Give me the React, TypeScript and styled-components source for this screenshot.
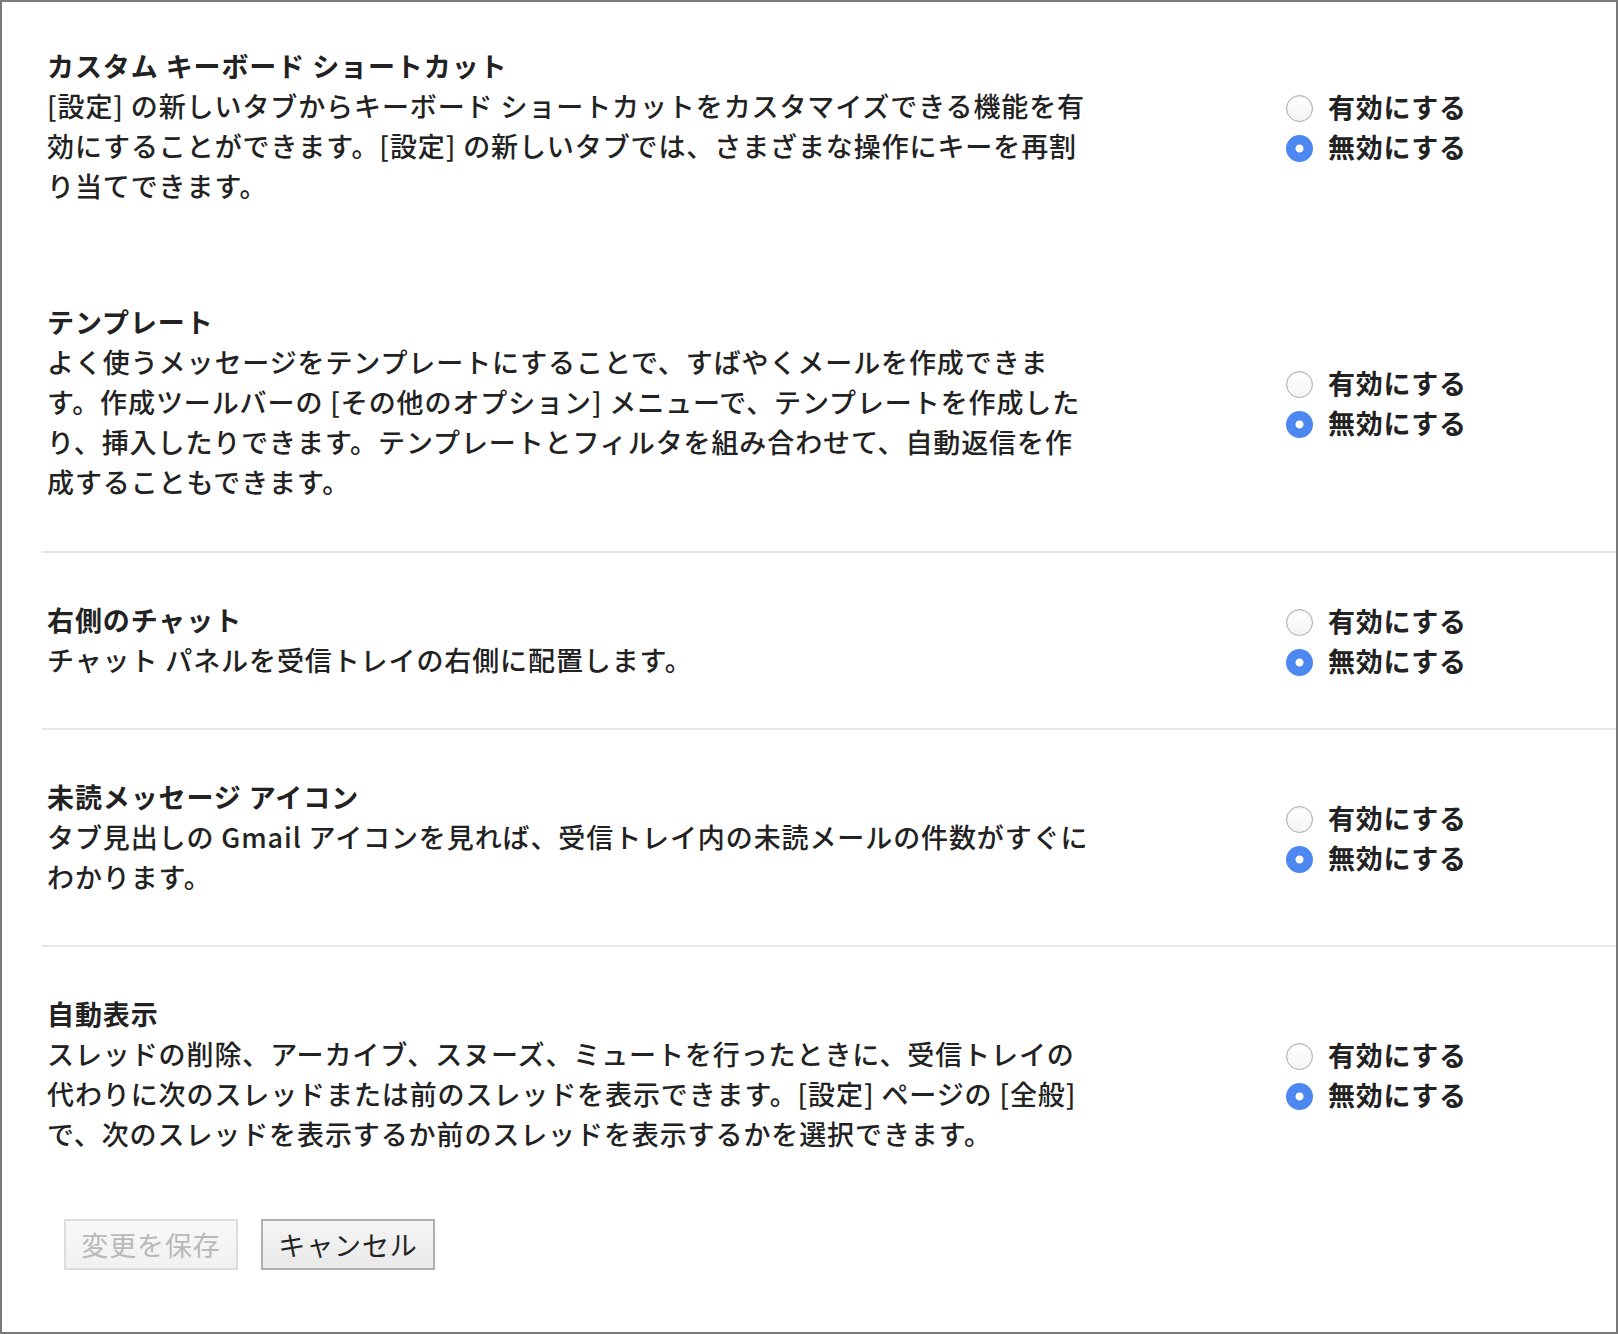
import React from "react";
import styled, { createGlobalStyle, css } from "styled-components";

const GlobalStyle = createGlobalStyle`
  html, body { margin: 0; padding: 0; background: #ffffff; }
  body { font-family: "Noto Sans CJK JP", "Noto Sans", sans-serif; color: #222222; }
  * { box-sizing: border-box; }
`;

const Frame = styled.div`
  width: 1618px;
  height: 1334px;
  border: 2px solid #7a7a7a;
  background: #ffffff;
  padding: 0 0 0 40px;
  overflow: hidden;
`;

const List = styled.div`
  display: flex;
  flex-direction: column;
`;

type Divider = "none" | "hidden" | "line";

const Row = styled.section<{ $divider: Divider }>`
  display: grid;
  grid-template-columns: 1244px auto;
  align-items: center;
  padding: 47px 0 48px;
  border-top: 2px solid #e6e6e6;
  ${(p) =>
    p.$divider === "none" &&
    css`
      border-top: none;
      padding: 44px 0 47px;
    `}
  ${(p) =>
    p.$divider === "hidden" &&
    css`
      border-top-color: transparent;
      padding-bottom: 49px;
    `}
`;

const TextBlock = styled.div`
  width: 1160px;
  padding-left: 5px;
  font-size: 27px;
  line-height: 40px;
  letter-spacing: 0.9px;
  white-space: nowrap;
`;

const Title = styled.div`
  font-weight: 700;
  color: #222222;
`;

const Desc = styled.div`
  font-weight: 500;
  color: #222222;
`;

const RadioGroup = styled.div`
  display: flex;
  flex-direction: column;
`;

const RadioLabel = styled.label`
  display: flex;
  align-items: center;
  gap: 15px;
  height: 40px;
  font-size: 27px;
  font-weight: 700;
  letter-spacing: 0.7px;
  color: #222222;
  cursor: pointer;
`;

const RadioInput = styled.input`
  appearance: none;
  -webkit-appearance: none;
  margin: 0;
  width: 27px;
  height: 27px;
  border-radius: 50%;
  flex: 0 0 auto;
  border: 1px solid #a8a8a8;
  background: linear-gradient(#ffffff, #f4f4f4);
  box-shadow: inset 0 1px 2px rgba(0, 0, 0, 0.1);
  position: relative;
  top: 2px;

  &:checked {
    border: none;
    background: radial-gradient(circle at center, #ffffff 0, #ffffff 3.6px, #4d88f0 4.4px);
    box-shadow: none;
  }
`;

const Buttons = styled.div`
  display: flex;
  gap: 23px;
  margin: 17px 0 0 22px;
`;

const Button = styled.button<{ $disabledLook?: boolean }>`
  width: 174px;
  height: 51px;
  padding: 0;
  font-family: "Noto Sans CJK JP", "Noto Sans", sans-serif;
  font-size: 27px;
  letter-spacing: 0.9px;
  border: 2px solid ${(p) => (p.$disabledLook ? "#dcdcdc" : "#b0b0b0")};
  background: ${(p) =>
    p.$disabledLook
      ? "linear-gradient(#f8f8f8, #f1f1f1)"
      : "linear-gradient(#f5f5f5, #e9e9e9)"};
  color: ${(p) => (p.$disabledLook ? "#b9b9b9" : "#222222")};
  cursor: ${(p) => (p.$disabledLook ? "default" : "pointer")};
`;

type Setting = {
  id: string;
  title: string;
  lines: string[];
  divider: Divider;
};

const settings: Setting[] = [
  {
    id: "kbd",
    title: "カスタム キーボード ショートカット",
    lines: [
      "[設定] の新しいタブからキーボード ショートカットをカスタマイズできる機能を有",
      "効にすることができます。[設定] の新しいタブでは、さまざまな操作にキーを再割",
      "り当てできます。",
    ],
    divider: "none",
  },
  {
    id: "tpl",
    title: "テンプレート",
    lines: [
      "よく使うメッセージをテンプレートにすることで、すばやくメールを作成できま",
      "す。作成ツールバーの [その他のオプション] メニューで、テンプレートを作成した",
      "り、挿入したりできます。テンプレートとフィルタを組み合わせて、自動返信を作",
      "成することもできます。",
    ],
    divider: "hidden",
  },
  {
    id: "chat",
    title: "右側のチャット",
    lines: ["チャット パネルを受信トレイの右側に配置します。"],
    divider: "line",
  },
  {
    id: "unread",
    title: "未読メッセージ アイコン",
    lines: [
      "タブ見出しの Gmail アイコンを見れば、受信トレイ内の未読メールの件数がすぐに",
      "わかります。",
    ],
    divider: "line",
  },
  {
    id: "auto",
    title: "自動表示",
    lines: [
      "スレッドの削除、アーカイブ、スヌーズ、ミュートを行ったときに、受信トレイの",
      "代わりに次のスレッドまたは前のスレッドを表示できます。[設定] ページの [全般]",
      "で、次のスレッドを表示するか前のスレッドを表示するかを選択できます。",
    ],
    divider: "line",
  },
];

export default function App() {
  return (
    <>
      <GlobalStyle />
      <Frame>
        <List>
          {settings.map((s) => (
            <Row key={s.id} $divider={s.divider}>
              <TextBlock>
                <Title>{s.title}</Title>
                <Desc>
                  {s.lines.map((l, i) => (
                    <div key={i}>{l}</div>
                  ))}
                </Desc>
              </TextBlock>
              <RadioGroup>
                <RadioLabel>
                  <RadioInput type="radio" name={s.id} value="on" />
                  有効にする
                </RadioLabel>
                <RadioLabel>
                  <RadioInput type="radio" name={s.id} value="off" defaultChecked />
                  無効にする
                </RadioLabel>
              </RadioGroup>
            </Row>
          ))}
        </List>
        <Buttons>
          <Button $disabledLook>変更を保存</Button>
          <Button>キャンセル</Button>
        </Buttons>
      </Frame>
    </>
  );
}
